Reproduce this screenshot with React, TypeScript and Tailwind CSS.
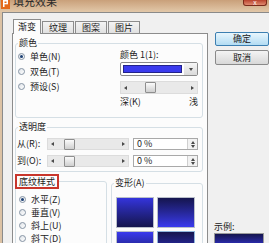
import React from 'react';

const Radio = ({ label, checked }: { label: string; checked?: boolean }) => (
  <div className="flex items-center h-[13px]">
    <div className="w-[7px] h-[7px] rounded-full border border-[#8593a3] bg-gradient-to-br from-[#dfe3e8] to-white flex items-center justify-center">
      {checked && <div className="w-[3px] h-[3px] rounded-full bg-[#1c3f73]" />}
    </div>
    <span className="ml-[5px] leading-[12px]">{label}</span>
  </div>
);

const Arrow = ({ dir }: { dir: 'l' | 'r' | 'u' | 'd' }) => {
  const pts = { l: '3,0 0,2 3,4', r: '0,0 3,2 0,4', u: '0,3 2,0 4,3', d: '0,0 4,0 2,3' }[dir];
  const wide = dir === 'u' || dir === 'd';
  return (
    <svg width={wide ? 4 : 3} height={wide ? 3 : 4} viewBox={wide ? '0 0 4 3' : '0 0 3 4'}>
      <polygon points={pts} fill="#4a4a4a" />
    </svg>
  );
};

const Slider = ({ thumb }: { thumb: number }) => (
  <div className="flex items-center h-full bg-[#e9e9e9] border border-[#dcdcdc] px-[3px]">
    <Arrow dir="l" />
    <div className="flex-1 flex items-center">
      <div style={{ marginLeft: thumb }} className="w-[11px] h-[11px] border border-[#8e8e8e] rounded-[1px] bg-gradient-to-b from-[#fbfbfb] to-[#cfcfcf]" />
    </div>
    <Arrow dir="r" />
  </div>
);

const Spin = () => (
  <div className="flex h-full border border-[#a9a9a9] bg-white">
    <span className="flex-1 pl-[3px] leading-[10px] text-[9px]">0 %</span>
    <div className="w-[10px] border-l border-[#cfcfcf] flex flex-col items-center justify-center gap-[1px] bg-[#f2f2f2]">
      <Arrow dir="u" />
      <Arrow dir="d" />
    </div>
  </div>
);

const GroupLabel = ({ children }: { children: React.ReactNode }) => (
  <span className="block w-fit -mt-[7px] ml-[2px] px-[1px] bg-[#fcfcfc] leading-[12px]">{children}</span>
);

export default function App() {
  return (
    <div className="w-[269px] h-[243px] overflow-hidden flex flex-col bg-[#dcc2a4] text-[9px] text-[#222] font-['Noto_Sans_CJK_SC',sans-serif]">
      {/* title bar */}
      <div className="h-[12px] shrink-0 flex items-start bg-gradient-to-b from-[#c9a07a] to-[#e2c8a9]">
        <svg width="9" height="9" viewBox="0 0 9 9" className="ml-[1px]">
          <rect x="0" y="0" width="9" height="9" fill="#e46b1c" />
          <rect x="2" y="0" width="5" height="1.5" fill="#fff" />
          <rect x="2" y="0" width="1.5" height="7" fill="#fff" />
          <rect x="5.5" y="0" width="1.5" height="4" fill="#fff" />
          <rect x="2" y="3" width="5" height="1.3" fill="#fff" />
        </svg>
        <span className="ml-[3px] -mt-[5px] text-[11px] leading-[13px] text-[#2a2a2a]">填充效果</span>
        <div className="ml-auto mr-[2px] w-[24px] h-[6px] rounded-b-[3px] border border-t-0 border-[#7a2a1a] bg-gradient-to-b from-[#b8402c] to-[#e08a70] flex justify-center">
          <span className="text-[7px] leading-[4px] text-white">x</span>
        </div>
      </div>

      <div className="flex-1 min-h-0 flex">
        <div className="w-[3px] border-r border-[#8a8a8a]" />
        <div className="flex-1 flex border-t border-[#8a8a8a] bg-[#f0f0f0]">
          {/* left: tabs + panel */}
          <div className="ml-[9px] w-[196px] flex flex-col pt-[6px] overflow-hidden">
            <div className="flex items-end h-[14px] shrink-0">
              <div className="ml-[1px] w-[28px] h-[15px] -mb-[1px] relative z-10 bg-[#fcfcfc] border border-b-0 border-[#8c8c8c] flex justify-center items-center leading-[12px]">渐变</div>
              <div className="ml-[1px] w-[32px] h-[12px] border border-b-0 border-[#8c8c8c] bg-gradient-to-b from-[#f3f3f3] to-[#e1e1e1] flex justify-center items-center leading-[11px]">纹理</div>
              <div className="ml-[1px] w-[32px] h-[12px] border border-b-0 border-[#8c8c8c] bg-gradient-to-b from-[#f3f3f3] to-[#e1e1e1] flex justify-center items-center leading-[11px]">图案</div>
              <div className="ml-[1px] w-[32px] h-[12px] border border-b-0 border-[#8c8c8c] bg-gradient-to-b from-[#f3f3f3] to-[#e1e1e1] flex justify-center items-center leading-[11px]">图片</div>
            </div>
            <div className="flex-1 border border-[#8c8c8c] bg-[#fcfcfc] pl-[2px] pr-[4px]">
              {/* 颜色 */}
              <div className="mt-[9px] h-[75px] border border-[#d5dfe5] rounded-[3px] flex flex-col">
                <GroupLabel>颜色</GroupLabel>
                <div className="flex">
                  <div className="pl-[2px] flex flex-col">
                    <div className="h-[15px] flex items-center"><Radio label="单色(N)" checked /></div>
                    <div className="h-[15px] flex items-center"><Radio label="双色(T)" /></div>
                    <div className="h-[15px] flex items-center"><Radio label="预设(S)" /></div>
                  </div>
                  <div className="ml-auto mr-[4px] w-[78px] flex flex-col">
                    <span className="leading-[12px]">颜色 1(1):</span>
                    <div className="mt-[1px] h-[14px] flex border border-[#8a8a8a] rounded-[2px] bg-white">
                      <div className="flex-1 m-[2px] bg-[#3b3bee] border border-[#23238a]" />
                      <div className="w-[13px] flex items-center justify-center bg-gradient-to-b from-[#f6f6f6] to-[#dadada]">
                        <Arrow dir="d" />
                      </div>
                    </div>
                    <div className="mt-[5px] h-[13px]"><Slider thumb={18} /></div>
                    <div className="mt-[2px] flex justify-between leading-[12px]">
                      <span>深(K)</span>
                      <span>浅</span>
                    </div>
                  </div>
                </div>
              </div>

              {/* 透明度 */}
              <div className="mt-[9px] h-[45px] border border-[#d5dfe5] rounded-[3px] flex flex-col">
                <GroupLabel>透明度</GroupLabel>
                <div className="mt-[5px] h-[12px] flex items-center">
                  <span className="w-[31px] pl-[1px] leading-[12px]">从(R):</span>
                  <div className="w-[82px] h-full"><Slider thumb={10} /></div>
                  <div className="ml-[4px] w-[65px] h-full"><Spin /></div>
                </div>
                <div className="mt-[5px] h-[12px] flex items-center">
                  <span className="w-[31px] pl-[1px] leading-[12px]">到(O):</span>
                  <div className="w-[82px] h-full"><Slider thumb={10} /></div>
                  <div className="ml-[4px] w-[65px] h-full"><Spin /></div>
                </div>
              </div>

              {/* 底纹样式 + 变形 */}
              <div className="flex gap-[4px] items-start">
                <div className="mt-[9px] w-[92px] h-[80px] border border-[#d5dfe5] rounded-[3px] flex flex-col">
                  <span className="block w-fit -mt-[8px] -ml-[1px] px-[2px] border-2 border-[#c8362c] bg-[#fcfcfc] leading-[11px]">底纹样式</span>
                  <div className="mt-[4px] pl-[3px] flex flex-col">
                    <Radio label="水平(Z)" checked />
                    <Radio label="垂直(V)" />
                    <Radio label="斜上(U)" />
                    <Radio label="斜下(D)" />
                  </div>
                </div>
                <div className="mt-[11px] flex-1 h-[80px] border border-[#d5dfe5] rounded-[3px] flex flex-col">
                  <GroupLabel>变形(A)</GroupLabel>
                  <div className="mt-[8px] ml-[4px] grid grid-cols-[38px_38px] gap-[3px]">
                    <div className="h-[31px] border border-[#b9bfca] bg-gradient-to-b from-[#3434dc] to-[#15154e]" />
                    <div className="h-[31px] border border-[#b9bfca] bg-gradient-to-b from-[#15154e] to-[#3a3aee]" />
                    <div className="h-[31px] border border-[#b9bfca] bg-gradient-to-b from-[#3a3aee] to-[#15154e]" />
                    <div className="h-[31px] border border-[#8fb6dc] bg-gradient-to-b from-[#15154e] to-[#3a3aee]" />
                  </div>
                </div>
              </div>
            </div>
          </div>

          {/* right: buttons + sample */}
          <div className="ml-[7px] w-[54px] shrink-0 flex flex-col">
            <button className="mt-[19px] h-[14px] rounded-[2px] border border-[#3c7fb1] bg-gradient-to-b from-[#e8f6fd] to-[#b2dcf3] leading-[12px] text-[#222]">确定</button>
            <button className="mt-[4px] h-[15px] rounded-[2px] border border-[#8a8a8a] bg-gradient-to-b from-[#f4f4f4] to-[#d8d8d8] leading-[12px] text-[#222]">取消</button>
            <div className="mt-auto -ml-[1px] flex flex-col">
              <span className="leading-[12px]">示例:</span>
              <div className="w-[50px] h-[10px] border border-[#9a9a9a] border-b-0 bg-gradient-to-b from-[#15154e] to-[#2a2aa8]" />
            </div>
          </div>
        </div>
      </div>
    </div>
  );
}
